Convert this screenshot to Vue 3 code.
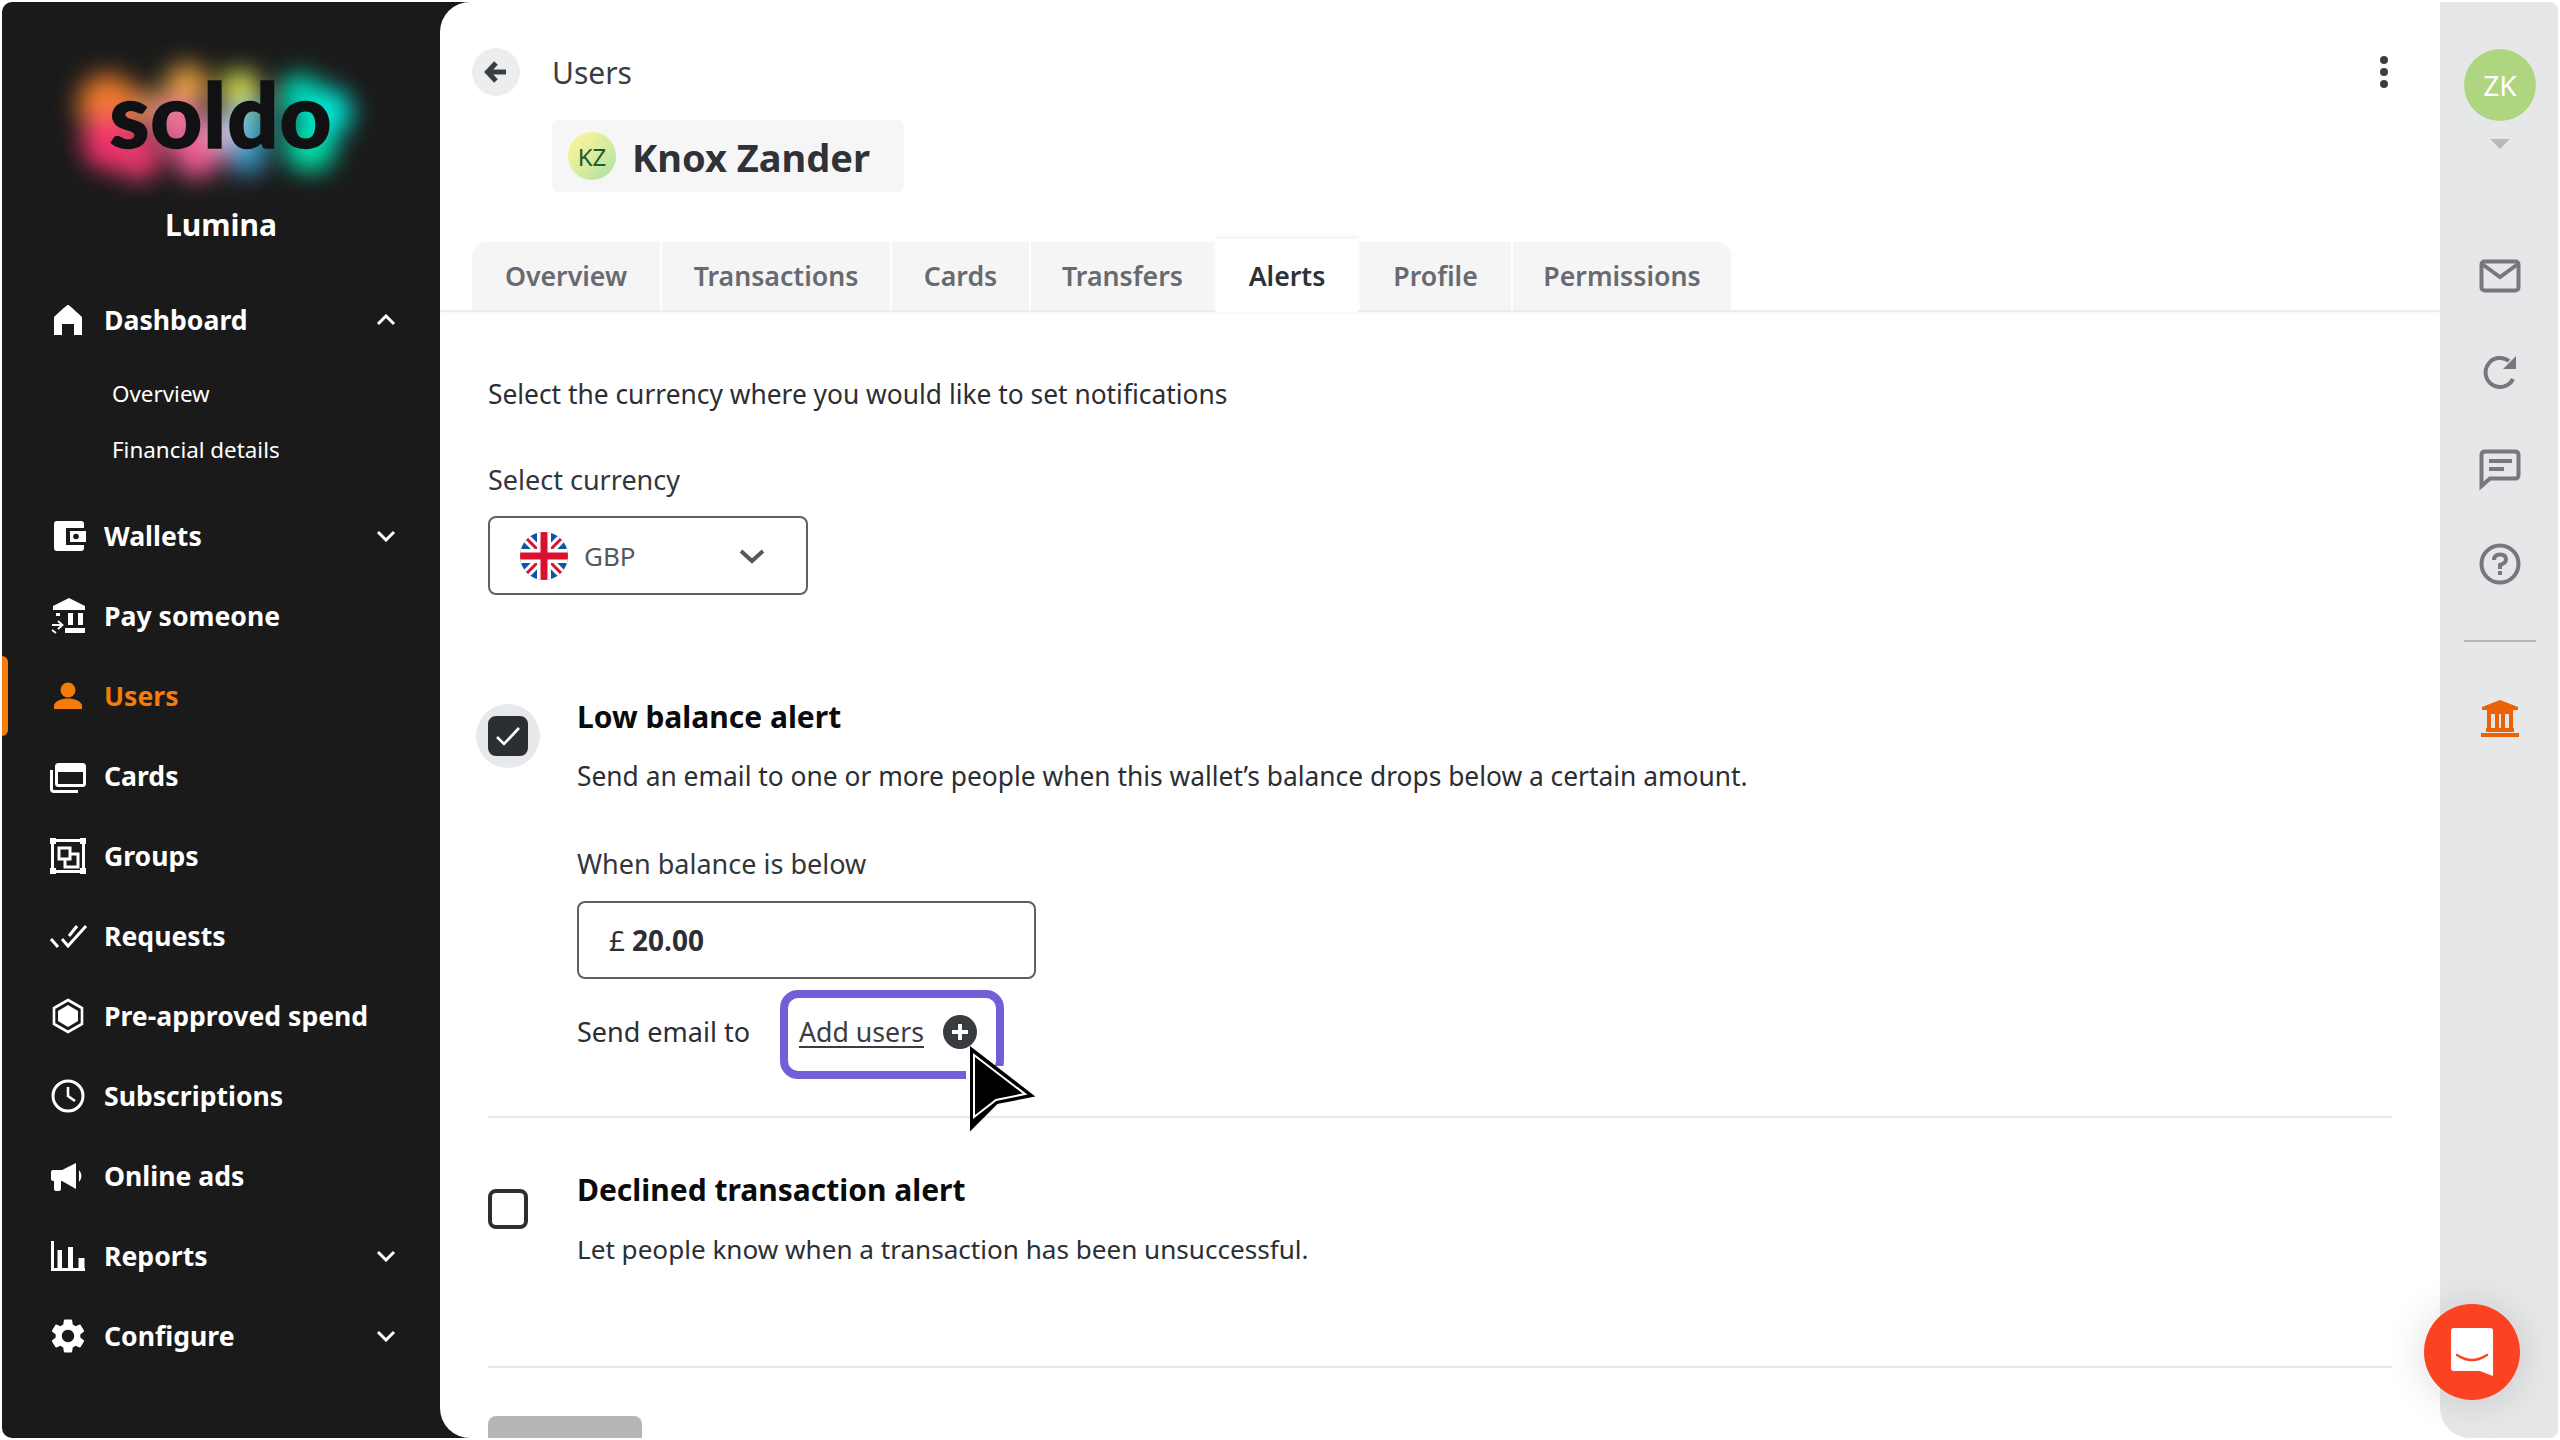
<script setup>
const nav = [
  { id: 'wallet', label: 'Wallets', chevron: 'down' },
  { id: 'pay', label: 'Pay someone' },
  { id: 'user', label: 'Users', active: true },
  { id: 'cards', label: 'Cards' },
  { id: 'groups', label: 'Groups' },
  { id: 'requests', label: 'Requests' },
  { id: 'hex', label: 'Pre-approved spend' },
  { id: 'clock', label: 'Subscriptions' },
  { id: 'ads', label: 'Online ads' },
  { id: 'reports', label: 'Reports', chevron: 'down' },
  { id: 'gear', label: 'Configure', chevron: 'down' }
]
const tabs = ['Overview', 'Transactions', 'Cards', 'Transfers', 'Alerts', 'Profile', 'Permissions']
const tabWidths = [188, 228, 137, 183, 142, 151, 218]
const blobs = [
  [108, 104, 30, '#f07a2a'], [110, 142, 28, '#f5306c'], [138, 156, 24, '#e8386e'], [150, 108, 18, '#c88a50'],
  [187, 86, 22, '#e5a03c'], [180, 124, 24, '#f070a0'], [197, 154, 24, '#f05a94'],
  [240, 90, 20, '#d8e050'], [228, 130, 18, '#e8d8f0'], [252, 122, 20, '#40b8c8'], [247, 154, 20, '#3a9ccc'],
  [300, 96, 22, '#00d8b0'], [310, 146, 26, '#00e0a8'], [328, 112, 24, '#00e8d8']
]
</script>

<template>
  <div class="shell">
    <aside class="side">
      <div class="logo">
        <svg class="glow" width="440" height="230" viewBox="0 0 440 230">
          <defs>
            <filter id="soft" x="-30%" y="-30%" width="160%" height="160%">
              <feGaussianBlur stdDeviation="12" />
            </filter>
          </defs>
          <g filter="url(#soft)">
            <circle v-for="(b, i) in blobs" :key="i" :cx="b[0]" :cy="b[1]" :r="b[2]" :fill="b[3]" />
          </g>
        </svg>
        <span class="word">soldo</span>
      </div>
      <div class="org">Lumina</div>

      <div class="row">
        <svg class="ic" viewBox="0 0 40 40"><path d="M20 5 C21 5 22 6 34 17 V35 H26 V24 H14 V35 H6 V17 C18 6 19 5 20 5Z" fill="#fff" /></svg>
        <span class="row-text">Dashboard</span>
        <svg class="chev" viewBox="0 0 20 12"><path d="M2 10 L10 2 L18 10" /></svg>
      </div>
      <div class="subs">
        <div class="sub">Overview</div>
        <div class="sub">Financial details</div>
      </div>

      <div v-for="n in nav" :key="n.id" class="row" :class="{ on: n.active }">
        <svg class="ic" viewBox="0 0 40 40">
          <template v-if="n.id === 'wallet'">
            <rect x="6" y="5" width="30" height="30" rx="3" fill="#fff" />
            <rect x="18" y="12" width="20" height="17" fill="#1a1a1a" />
            <rect x="22" y="15" width="16" height="11" fill="#fff" />
            <circle cx="28" cy="20.5" r="2.8" fill="#1a1a1a" />
          </template>
          <template v-else-if="n.id === 'pay'">
            <path d="M21 2 L37 10 V14 H5 V10Z" fill="#fff" />
            <path d="M20 17 H25 V29 H20Z M30 17 H35 V29 H30Z M17 32 H37 V37 H17Z M8 17 H12 V20 H8Z" fill="#fff" />
            <path d="M4 29 H14 M10 25 L14.5 29 L10 33 M4 34 L8 37" fill="none" stroke="#fff" stroke-width="1.8" />
          </template>
          <template v-else-if="n.id === 'user'">
            <circle cx="20" cy="14" r="7.5" fill="#f47b0c" />
            <path d="M6 33 V30 C6 25 14 22.5 20 22.5 C26 22.5 34 25 34 30 V33Z" fill="#f47b0c" />
          </template>
          <template v-else-if="n.id === 'cards'">
            <rect x="8.5" y="8.5" width="28" height="21" rx="2" fill="none" stroke="#fff" stroke-width="3" />
            <rect x="8" y="8" width="29" height="8" fill="#fff" />
            <path d="M3.5 14 V33 Q3.5 35.5 6 35.5 H30" fill="none" stroke="#fff" stroke-width="3" />
          </template>
          <template v-else-if="n.id === 'groups'">
            <rect x="4.5" y="4.5" width="31" height="31" fill="none" stroke="#fff" stroke-width="3" />
            <path d="M2 2 H8 V8 H2Z M32 2 H38 V8 H32Z M2 32 H8 V38 H2Z M32 32 H38 V38 H32Z" fill="#fff" />
            <rect x="11" y="12" width="11" height="11" fill="none" stroke="#fff" stroke-width="3" />
            <path d="M22 18 H30 V31 H17 V23" fill="none" stroke="#fff" stroke-width="3" />
          </template>
          <template v-else-if="n.id === 'requests'">
            <path d="M3 23 L10 31 M14 23 L20 30 L38 10 M21 20 L29 10" fill="none" stroke="#fff" stroke-width="3" />
          </template>
          <template v-else-if="n.id === 'hex'">
            <path d="M20 4 L34 12 V28 L20 36 L6 28 V12Z" fill="none" stroke="#fff" stroke-width="2.6" />
            <path d="M20 9 L30 15 V25 L20 31 L10 25 V15Z" fill="#fff" />
          </template>
          <template v-else-if="n.id === 'clock'">
            <circle cx="20" cy="20" r="15" fill="none" stroke="#fff" stroke-width="3" />
            <path d="M20 11 V20 L27 25" fill="none" stroke="#fff" stroke-width="2.6" />
          </template>
          <template v-else-if="n.id === 'ads'">
            <path d="M5 14 H14 L28 7 V33 L14 25 H13 V33 Q13 35 11 35 H8 Q6 35 6 33 V25 H5 Q3 25 3 23 V16 Q3 14 5 14Z" fill="#fff" />
            <path d="M31 14 Q36 20 31 26Z" fill="#fff" />
          </template>
          <template v-else-if="n.id === 'reports'">
            <path d="M3 5 H6 V32 H37 V35 H3Z M9.5 14 H14 V32 H9.5Z M20 11 H25 V32 H20Z M30.5 22 H36.5 V32 H30.5Z" fill="#fff" />
          </template>
          <template v-else>
            <g transform="translate(20 20) scale(1.72) translate(-12 -12)">
              <path fill="#fff" d="M19.14 12.94c.04-.3.06-.61.06-.94 0-.32-.02-.64-.07-.94l2.03-1.58c.18-.14.23-.41.12-.61l-1.92-3.32c-.12-.22-.37-.29-.59-.22l-2.39.96c-.5-.38-1.03-.7-1.62-.94l-.36-2.54c-.04-.24-.24-.41-.48-.41h-3.84c-.24 0-.43.17-.47.41l-.36 2.54c-.59.24-1.13.57-1.62.94l-2.39-.96c-.22-.08-.47 0-.59.22L2.74 8.87c-.12.21-.08.47.12.61l2.03 1.58c-.05.3-.09.63-.09.94s.02.64.07.94l-2.03 1.58c-.18.14-.23.41-.12.61l1.92 3.32c.12.22.37.29.59.22l2.39-.96c.5.38 1.03.7 1.62.94l.36 2.54c.05.24.24.41.48.41h3.84c.24 0 .44-.17.47-.41l.36-2.54c.59-.24 1.13-.56 1.62-.94l2.39.96c.22.08.47 0 .59-.22l1.92-3.32c.12-.22.07-.47-.12-.61l-2.01-1.58zM12 15.6c-1.98 0-3.6-1.62-3.6-3.6s1.62-3.6 3.6-3.6 3.6 1.62 3.6 3.6-1.62 3.6-3.6 3.6z" />
            </g>
          </template>
        </svg>
        <span class="row-text">{{ n.label }}</span>
        <svg v-if="n.chevron" class="chev" viewBox="0 0 20 12"><path d="M2 2 L10 10 L18 2" /></svg>
      </div>
    </aside>

    <main class="main">
      <div class="crumb">
        <div class="back">
          <svg width="24" height="24" viewBox="0 0 24 24"><path d="M12 3 L3.5 12 L12 21 M4 12 H22" fill="none" stroke="#3a3d42" stroke-width="5" /></svg>
        </div>
        <span class="crumb-text">Users</span>
        <svg class="kebab" width="16" height="40" viewBox="0 0 16 40">
          <circle cx="8" cy="8" r="4" /><circle cx="8" cy="20" r="4" /><circle cx="8" cy="32" r="4" />
        </svg>
      </div>
      <div class="chip">
        <div class="kz">KZ</div>
        <span class="name">Knox Zander</span>
      </div>

      <div class="tabs">
        <div v-for="(t, i) in tabs" :key="t" class="tab" :class="{ cur: t === 'Alerts' }" :style="{ width: tabWidths[i] + 'px' }">{{ t }}</div>
      </div>

      <div class="body">
        <p class="lead">Select the currency where you would like to set notifications</p>
        <p class="label">Select currency</p>
        <div class="select">
          <svg width="48" height="48" viewBox="0 0 48 48">
            <defs><clipPath id="flagc"><circle cx="24" cy="24" r="24" /></clipPath></defs>
            <g clip-path="url(#flagc)">
              <rect width="48" height="48" fill="#0f55a6" />
              <path d="M0 0 L48 48 M48 0 L0 48" stroke="#fff" stroke-width="9" />
              <path d="M0 0 L48 48 M48 0 L0 48" stroke="#d9102f" stroke-width="3" />
              <path d="M24 0 V48 M0 24 H48" stroke="#fff" stroke-width="14" />
              <path d="M24 0 V48 M0 24 H48" stroke="#d9102f" stroke-width="7" />
            </g>
          </svg>
          <span class="code">GBP</span>
          <svg class="sel-chev" width="26" height="16" viewBox="0 0 26 16"><path d="M2 3 L13 13 L24 3" fill="none" stroke="#55585c" stroke-width="4" /></svg>
        </div>

        <div class="alert first">
          <div class="halo on">
            <div class="box checked">
              <svg width="26" height="22" viewBox="0 0 26 22"><path d="M2 12 L9 19 L24 3" fill="none" stroke="#fff" stroke-width="2.6" /></svg>
            </div>
          </div>
          <div class="alert-main">
            <h3>Low balance alert</h3>
            <p class="desc">Send an email to one or more people when this wallet’s balance drops below a certain amount.</p>
            <p class="label when">When balance is below</p>
            <div class="amount"><span class="pound">£</span><b>20.00</b></div>
            <div class="send">
              <span class="send-label">Send email to</span>
              <div class="add">
                <span class="add-link">Add users</span>
                <span class="plus">
                  <svg width="20" height="20" viewBox="0 0 20 20"><path d="M10 2 V18 M2 10 H18" stroke="#fff" stroke-width="4" /></svg>
                </span>
                <svg class="cursor" width="80" height="95" viewBox="0 0 80 95">
                  <rect x="6" y="26" width="42" height="15" fill="#fff" />
                  <path d="M11 8 L73 56 L37 63 L11 89Z" fill="#000" stroke="#000" stroke-width="2" />
                  <path d="M14 15 L65 54 L36 60 L14 77Z" fill="#000" stroke="#fff" stroke-width="2" />
                </svg>
              </div>
            </div>
          </div>
        </div>

        <hr class="rule rule-a" />

        <div class="alert second">
          <div class="halo">
            <div class="box"></div>
          </div>
          <div class="alert-main">
            <h3>Declined transaction alert</h3>
            <p class="desc second-desc">Let people know when a transaction has been unsuccessful.</p>
          </div>
        </div>

        <hr class="rule rule-b" />
        <div class="save"></div>
      </div>
    </main>

    <nav class="rail">
      <div class="me">ZK</div>
      <div class="tri"></div>
      <div class="tools">
        <svg width="48" height="48" viewBox="0 0 48 48" fill="none" stroke="#77787c" stroke-width="4">
          <rect x="5.5" y="9.5" width="37" height="29" rx="3" /><path d="M6 12 L24 25 L42 12" />
        </svg>
        <svg width="48" height="48" viewBox="0 0 48 48" fill="none" stroke="#77787c" stroke-width="4">
          <path d="M37 31 A14.5 14.5 0 1 1 33 13" /><path d="M40 8 V21 H27Z" fill="#77787c" stroke="none" />
        </svg>
        <svg width="48" height="48" viewBox="0 0 48 48" fill="none" stroke="#77787c" stroke-width="4">
          <path d="M5.5 11 Q5.5 7.5 9 7.5 H39 Q42.5 7.5 42.5 11 V31 Q42.5 34.5 39 34.5 H14 L5.5 42Z" /><path d="M13 17 H36 M13 25 H28" />
        </svg>
        <svg width="48" height="48" viewBox="0 0 48 48" fill="none" stroke="#77787c" stroke-width="4">
          <circle cx="24" cy="24" r="18.5" /><path d="M18 20 Q18 14.5 24 14.5 Q30 14.5 30 19.5 Q30 23 24 25 V29" /><path d="M22 31 H26 V35 H22Z" fill="#77787c" stroke="none" />
        </svg>
      </div>
      <div class="rail-rule"></div>
      <svg width="48" height="48" viewBox="0 0 48 48" fill="none" stroke="#ea6307" stroke-width="3">
        <path d="M24 6 L42 13 V16 H6 V13Z" fill="#ea6307" stroke="none" />
        <path d="M11 18 H37 M13 18 V35 M21 18 V35 M27 18 V35 M35 18 V35" stroke-width="4" />
        <path d="M10 36 H38 M5 41 H43" stroke-width="4" />
      </svg>
    </nav>

    <div class="intercom">
      <svg width="96" height="96" viewBox="0 0 96 96">
        <path d="M30 24 H66 Q69 24 69 27 V72 L56 67 H30 Q27 67 27 64 V27 Q27 24 30 24Z" fill="#fff" />
        <path d="M33 51 Q48 61 63 51" fill="none" stroke="#fb4221" stroke-width="2.5" stroke-linecap="round" />
      </svg>
    </div>
  </div>
</template>

<style>
html, body { margin: 0; background: #fff; }
</style>

<style scoped>
* { box-sizing: border-box; }
.shell {
  position: relative;
  width: 2560px;
  height: 1440px;
  padding: 2px;
  display: flex;
  overflow: hidden;
  background: #fff;
  font-family: "Noto Sans", "Open Sans", sans-serif;
  color: #2b2e33;
}
.side {
  width: 478px;
  flex: none;
  background: #1a1a1a;
  color: #fff;
  border-radius: 10px 0 0 10px;
  padding-right: 40px;
}
.logo {
  position: relative;
  height: 200px;
  display: flex;
  justify-content: center;
}
.glow { position: absolute; left: -2px; top: -2px; }
.word {
  position: relative;
  margin-top: 56px;
  height: 110px;
  font: 900 90px/110px Lato, sans-serif;
  letter-spacing: 1px;
  -webkit-text-stroke: 1.5px #111114;
  color: #111114;
}
.org {
  text-align: center;
  font-weight: 700;
  font-size: 30px;
  line-height: 44px;
  height: 78px;
  padding-top: 1px;
}
.row {
  height: 80px;
  display: flex;
  align-items: center;
  padding-left: 46px;
  font-size: 26.6px;
  font-weight: 700;
  gap: 16px;
  position: relative;
}
.row-text { padding-bottom: 1px; }
.row.on { color: #f47b0c; }
.row.on::before {
  content: "";
  position: absolute;
  left: 0;
  top: 0;
  width: 6px;
  height: 80px;
  background: #f47b0c;
  border-radius: 0 6px 6px 0;
}
.ic { width: 40px; height: 40px; flex: none; }
.chev {
  width: 20px;
  height: 12px;
  margin-left: auto;
  margin-right: 44px;
  fill: none;
  stroke: #fff;
  stroke-width: 3;
}
.subs { padding: 5px 0 19px; }
.sub {
  height: 56px;
  line-height: 57px;
  padding-left: 110px;
  font-size: 22.4px;
}
.main {
  flex: 1;
  min-width: 0;
  margin-left: -40px;
  position: relative;
  background: #fff;
  border-radius: 30px 0 0 30px;
  overflow: hidden;
}
.crumb {
  display: flex;
  align-items: center;
  gap: 32px;
  height: 48px;
  margin-top: 46px;
  padding: 0 48px 0 32px;
}
.back {
  width: 48px;
  height: 48px;
  border-radius: 50%;
  background: #ecedee;
  display: flex;
  align-items: center;
  justify-content: center;
}
.crumb-text { font-size: 30px; color: #3a3d42; }
.kebab { margin-left: auto; fill: #3a3d42; }
.chip {
  width: 352px;
  height: 72px;
  margin: 24px 0 0 112px;
  padding-left: 16px;
  display: flex;
  align-items: center;
  gap: 16px;
  background: #f6f6f7;
  border-radius: 8px;
}
.kz {
  width: 48px;
  height: 48px;
  border-radius: 50%;
  background: linear-gradient(135deg, #f3f29a 20%, #d6ec9e 55%, #a8dfa6);
  display: flex;
  align-items: center;
  justify-content: center;
  font-size: 24px;
  color: #1f5a35;
}
.name { font-size: 38px; font-weight: 700; color: #2f3237; white-space: nowrap; padding-top: 2px; }
.tabs {
  display: flex;
  gap: 2px;
  margin-top: 50px;
  padding-left: 32px;
  height: 70px;
  border-bottom: 2px solid #ececed;
  box-shadow: 0 2px 3px rgba(0, 0, 0, 0.03);
}
.tab {
  height: 68px;
  flex: none;
  display: flex;
  align-items: center;
  justify-content: center;
  padding-bottom: 2px;
  background: #f5f5f6;
  font-size: 26.7px;
  font-weight: 600;
  color: #676a6f;
  white-space: nowrap;
}
.tab:first-child { border-top-left-radius: 14px; }
.tab:last-child { border-top-right-radius: 14px; }
.tab.cur {
  height: 73px;
  margin-top: -3px;
  padding-top: 1px;
  padding-bottom: 2px;
  background: #fff;
  color: #2e3135;
  box-shadow: 0 -3px 4px rgba(0, 0, 0, 0.05);
  position: relative;
}
.body { padding: 62px 48px 0; }
p { margin: 0; }
.lead, .desc { font-size: 26.35px; line-height: 40px; color: #2b2e33; white-space: nowrap; }
.label { font-size: 27px; line-height: 40px; color: #33363b; }
.lead + .label { margin-top: 46px; }
.select {
  width: 320px;
  height: 79px;
  margin-top: 16px;
  border: 2px solid #5f6062;
  border-radius: 8px;
  display: flex;
  align-items: center;
  padding: 0 41px 0 30px;
  gap: 16px;
}
.code { font-size: 26px; color: #55585c; }
.sel-chev { margin-left: auto; }
.alert { display: flex; }
.alert.first { margin-top: 100px; }
.alert.second { margin-top: 50px; }
.halo {
  flex: none;
  width: 64px;
  height: 64px;
  margin: 9px 37px 0 -12px;
  border-radius: 50%;
  display: flex;
  align-items: center;
  justify-content: center;
}
.halo.on { background: #e8e9ea; }
.box {
  width: 40px;
  height: 40px;
  border: 4px solid #2b2e33;
  border-radius: 8px;
  display: flex;
  align-items: center;
  justify-content: center;
}
.box.checked { background: #2b2e33; }
.alert-main { flex: 1; }
h3 {
  margin: 0;
  font-size: 30px;
  line-height: 44px;
  font-weight: 700;
  color: #0b0b0c;
}
.desc { margin-top: 17px; }
.when { margin-top: 48px; }
.amount {
  width: 459px;
  height: 78px;
  margin-top: 17px;
  border: 2px solid #5f6062;
  border-radius: 8px;
  display: flex;
  align-items: center;
  padding-left: 30px;
  gap: 7px;
  font-size: 28px;
}
.amount b { font-weight: 700; }
.pound { font-weight: 400; }
.send { display: flex; margin-top: 11px; align-items: flex-start; }
.send-label {
  width: 203px;
  flex: none;
  padding-top: 22px;
  font-size: 27px;
  line-height: 40px;
}
.add {
  position: relative;
  width: 224px;
  height: 89px;
  border: 8px solid #705fd6;
  border-radius: 18px;
  padding: 14px 0 0 11px;
  display: flex;
  align-items: flex-start;
}
.add-link {
  width: 144px;
  flex: none;
  font-size: 26.7px;
  line-height: 40px;
  text-decoration: underline;
  text-underline-offset: 4px;
  color: #3a3d42;
  white-space: nowrap;
}
.plus {
  width: 34px;
  height: 34px;
  margin-top: 3px;
  border-radius: 50%;
  background: #383b40;
  display: flex;
  align-items: center;
  justify-content: center;
}
.cursor { position: absolute; left: 172px; top: 42px; overflow: visible; }
.rule { border: 0; height: 2px; background: #e8e8e9; margin: 0; }
.rule-a { margin-top: 37px; }
.second-desc { margin-top: 17px; font-size: 26.1px; }
.rule-b { margin-top: 97px; }
.save {
  width: 154px;
  height: 60px;
  margin-top: 48px;
  border-radius: 8px 8px 0 0;
  background: #b5b6b7;
}
.rail {
  width: 118px;
  flex: none;
  background: #e6e7e9;
  border-radius: 0 8px 8px 30px;
  display: flex;
  flex-direction: column;
  align-items: center;
  padding: 47px 0 0 2px;
}
.me {
  width: 72px;
  height: 72px;
  border-radius: 50%;
  background: #aed681;
  color: #fff;
  display: flex;
  align-items: center;
  justify-content: center;
  font-size: 28px;
}
.tri {
  width: 0;
  height: 0;
  margin-top: 18px;
  border-left: 10px solid transparent;
  border-right: 10px solid transparent;
  border-top: 10px solid #b8b9bb;
}
.tools {
  display: flex;
  flex-direction: column;
  gap: 48px;
  margin-top: 103px;
}
.rail-rule {
  width: 72px;
  height: 2px;
  background: #b4b5b7;
  margin: 52px 0 52px;
}
.intercom {
  position: absolute;
  right: 40px;
  bottom: 40px;
  width: 96px;
  height: 96px;
  border-radius: 50%;
  background: #fb4221;
  box-shadow: 0 2px 40px rgba(0, 0, 0, 0.14);
}
</style>
